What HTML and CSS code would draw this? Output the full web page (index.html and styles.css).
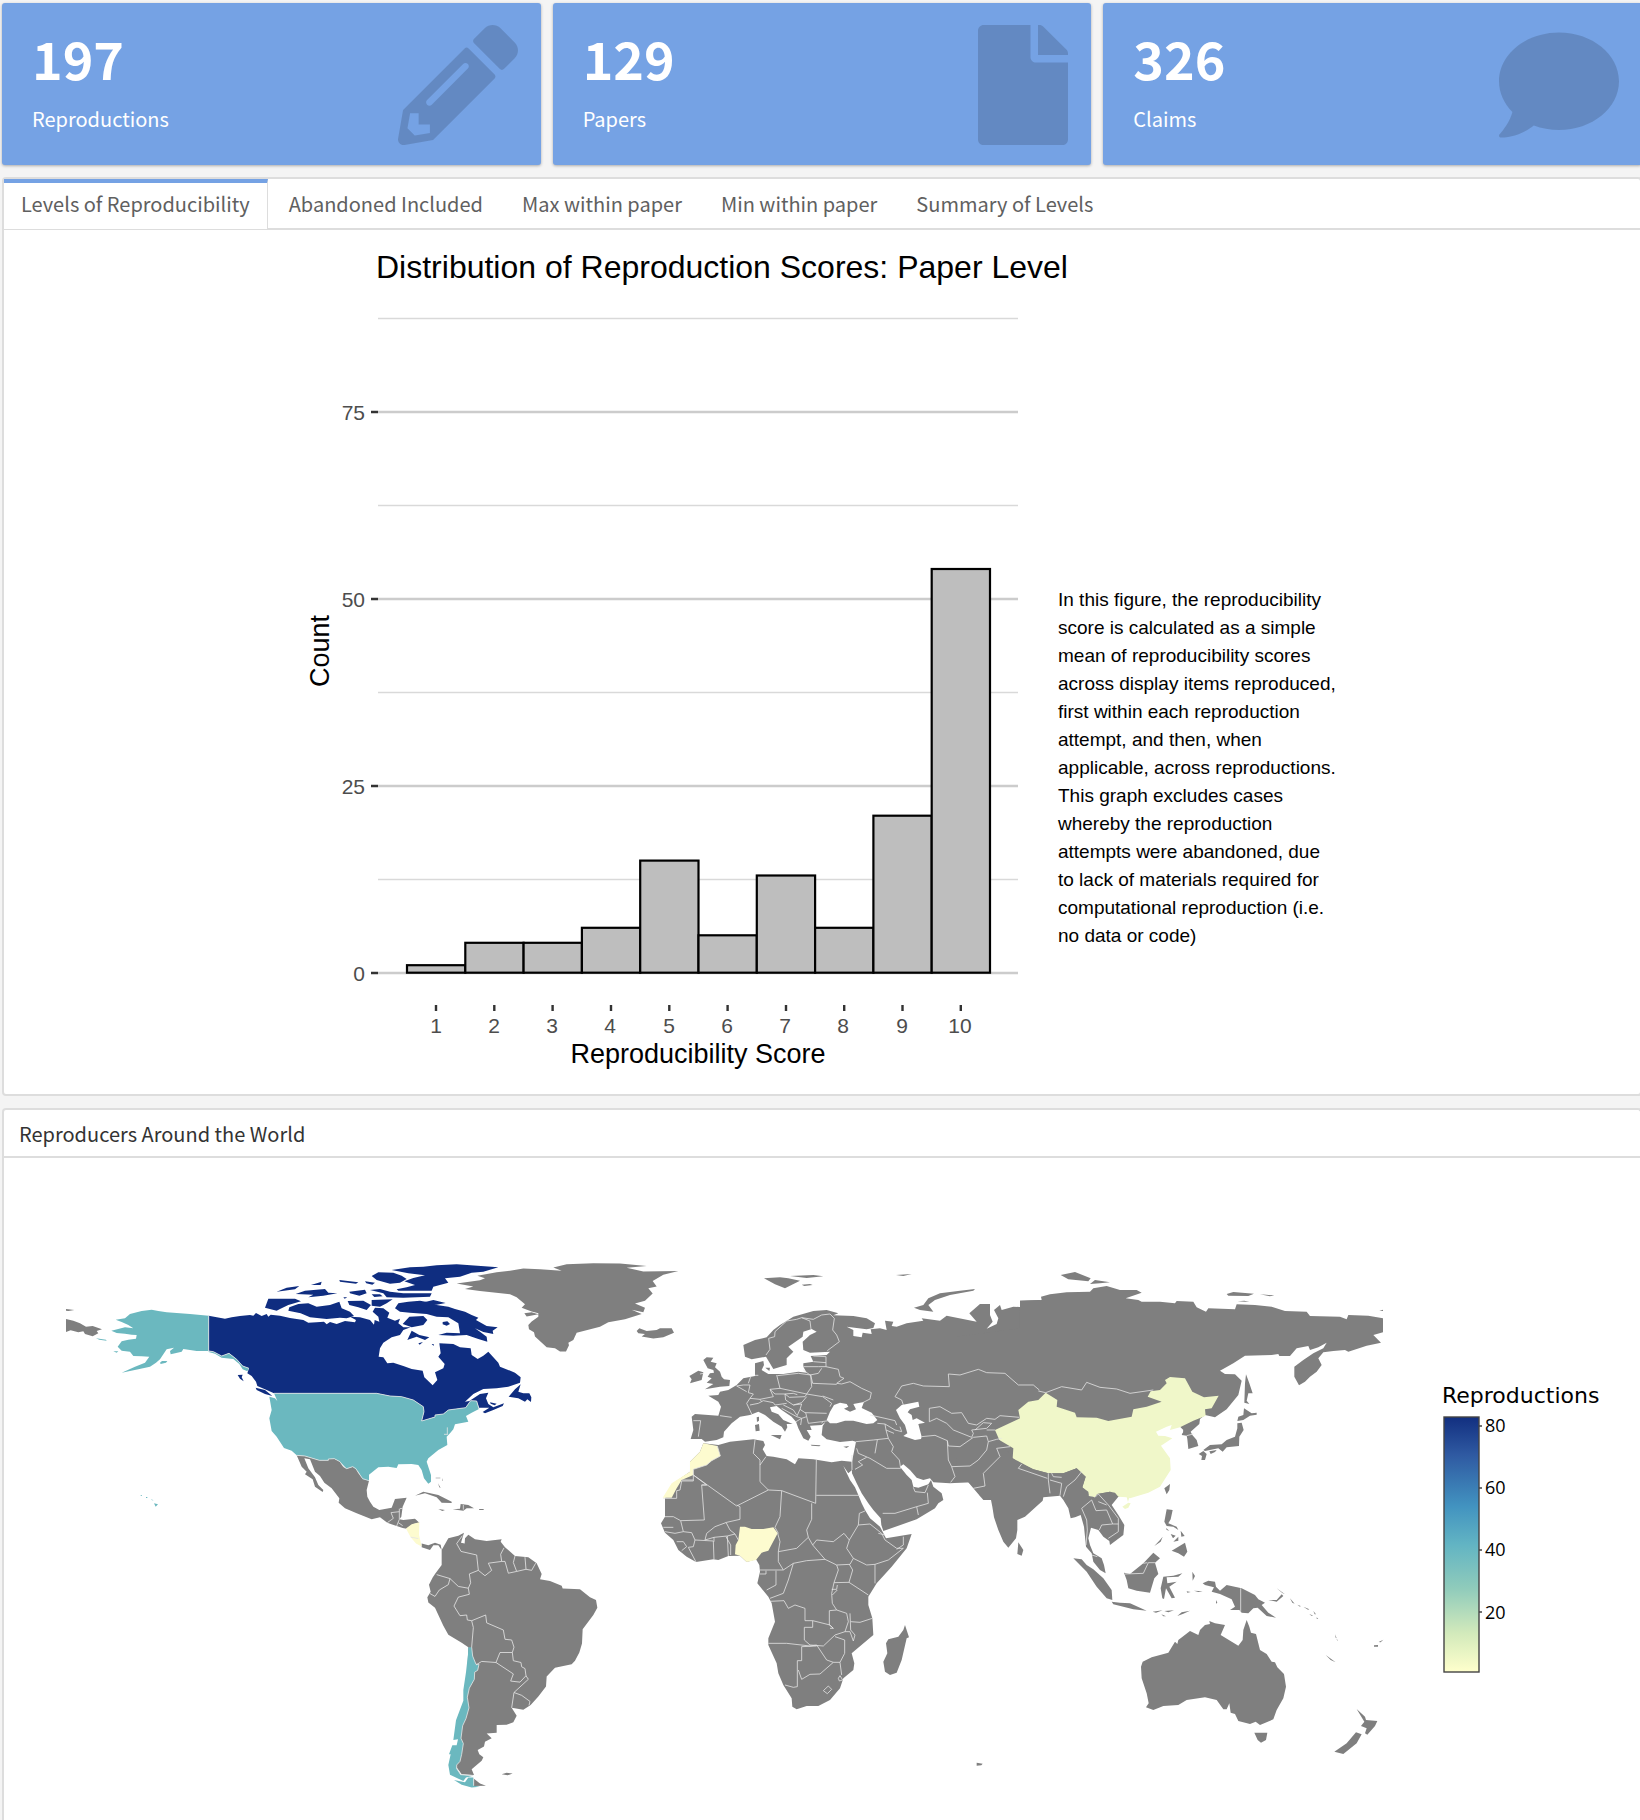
FILE: index.html
```html
<!DOCTYPE html>
<html lang="en">
<head>
<meta charset="utf-8">
<title>Reproductions dashboard</title>
<link rel="stylesheet" href="styles.css">
</head>
<body>
<main class="page">
  <section class="cards">
    <article class="card">
      <div><p class="value">197</p><p class="label">Reproductions</p></div>
      <svg class="icon" viewBox="0 0 512 512" aria-hidden="true"><path d="M497.9 142.1l-46.1 46.1c-4.7 4.7-12.3 4.7-17 0l-111-111c-4.7-4.7-4.7-12.3 0-17l46.1-46.1c18.7-18.7 49.1-18.7 67.9 0l60.1 60.1c18.8 18.7 18.8 49.1 0 67.9zM284.2 99.8L21.6 362.4.4 483.9c-2.9 16.4 11.4 30.6 27.8 27.8l121.5-21.3 262.6-262.6c4.7-4.7 4.7-12.3 0-17l-111-111c-4.8-4.7-12.4-4.7-17.1 0zM124.1 339.9c-5.5-5.5-5.5-14.3 0-19.8l154-154c5.5-5.5 14.3-5.5 19.8 0s5.5 14.3 0 19.8l-154 154c-5.5 5.5-14.3 5.5-19.8 0zM88 424h48v36.3l-64.5 11.3-31.1-31.1L51.7 376H88v48z"/></svg>
    </article>
    <article class="card">
      <div><p class="value">129</p><p class="label">Papers</p></div>
      <svg class="icon" viewBox="0 0 384 512" aria-hidden="true"><path d="M224 136V0H24C10.7 0 0 10.7 0 24v464c0 13.3 10.7 24 24 24h336c13.3 0 24-10.7 24-24V160H248c-13.2 0-24-10.8-24-24zm160-14.1v6.1H256V0h6.1c6.4 0 12.5 2.5 17 7l97.9 98c4.5 4.5 7 10.6 7 16.9z"/></svg>
    </article>
    <article class="card">
      <div><p class="value">326</p><p class="label">Claims</p></div>
      <svg class="icon" viewBox="0 0 512 512" aria-hidden="true"><path d="M256 32C114.6 32 0 125.1 0 240c0 49.6 21.4 95 57 130.7C44.5 421.1 2.7 466 2.2 466.5c-2.2 2.3-2.8 5.7-1.5 8.7S4.8 480 8 480c66.3 0 116-31.8 140.6-51.4 32.7 12.3 69 19.4 107.4 19.4 141.4 0 256-93.1 256-208S397.4 32 256 32z"/></svg>
    </article>
  </section>

  <section class="panel">
    <nav class="tabs" role="tablist">
      <button class="tab active" role="tab" aria-selected="true">Levels of Reproducibility</button>
      <button class="tab" role="tab">Abandoned Included</button>
      <button class="tab" role="tab">Max within paper</button>
      <button class="tab" role="tab">Min within paper</button>
      <button class="tab" role="tab">Summary of Levels</button>
    </nav>
    <figure class="figure">
      <svg class="chart" viewBox="302 230 740 864" role="img" aria-label="Distribution of reproduction scores">
        <text class="chart-title" x="376" y="278">Distribution of Reproduction Scores: Paper Level</text>
        <path class="minor" d="M378 318.5H1018M378 505.5H1018M378 692.5H1018M378 879.5H1018"/>
        <path class="major" d="M378 412H1018M378 599H1018M378 786H1018M378 973H1018"/>
        <g class="bars">
          <rect x="407" y="965.2" width="58.3" height="7.5"/>
          <rect x="465.3" y="942.8" width="58.3" height="29.9"/>
          <rect x="523.6" y="942.8" width="58.3" height="29.9"/>
          <rect x="581.9" y="927.8" width="58.3" height="44.9"/>
          <rect x="640.2" y="860.6" width="58.3" height="112.1"/>
          <rect x="698.5" y="935.3" width="58.3" height="37.4"/>
          <rect x="756.8" y="875.5" width="58.3" height="97.2"/>
          <rect x="815.1" y="927.8" width="58.3" height="44.9"/>
          <rect x="873.4" y="815.7" width="58.3" height="157"/>
          <rect x="931.7" y="569" width="58.3" height="403.7"/>
        </g>
        <path class="ticks" d="M371 412h7M371 599h7M371 786h7M371 973h7M436 1005v6M494.3 1005v6M552.6 1005v6M611 1005v6M669.3 1005v6M727.6 1005v6M786 1005v6M844.2 1005v6M902.5 1005v6M960.8 1005v6"/>
        <g class="tick-text" text-anchor="end">
          <text x="365" y="420">75</text><text x="365" y="607">50</text><text x="365" y="794">25</text><text x="365" y="981">0</text>
        </g>
        <g class="tick-text" text-anchor="middle">
          <text x="436" y="1033">1</text><text x="494" y="1033">2</text><text x="552" y="1033">3</text><text x="610" y="1033">4</text><text x="669" y="1033">5</text><text x="727" y="1033">6</text><text x="785" y="1033">7</text><text x="843" y="1033">8</text><text x="902" y="1033">9</text><text x="960" y="1033">10</text>
        </g>
        <text class="axis-title" text-anchor="middle" x="698" y="1063">Reproducibility Score</text>
        <text class="axis-title" text-anchor="middle" transform="translate(329 651) rotate(-90)">Count</text>
      </svg>
      <figcaption class="caption">In this figure, the reproducibility score is calculated as a simple mean of reproducibility scores across display items reproduced, first within each reproduction attempt, and then, when applicable, across reproductions. This graph excludes cases whereby the reproduction attempts were abandoned, due to lack of materials required for computational reproduction (i.e. no data or code)</figcaption>
    </figure>
  </section>

  <section class="panel last">
    <h2 class="panel-title">Reproducers Around the World</h2>
    <svg class="map" viewBox="0 0 1636 662" role="img" aria-label="World map of reproductions by country">
      <defs>
        <linearGradient id="scale" x1="0" y1="0" x2="0" y2="1">
          <stop offset="0" stop-color="#122f80"/><stop offset=".15" stop-color="#2f5aa2"/><stop offset=".35" stop-color="#4293c0"/><stop offset=".5" stop-color="#62b4c3"/><stop offset=".67" stop-color="#8fcbbb"/><stop offset=".85" stop-color="#d3eabb"/><stop offset="1" stop-color="#ffffcc"/>
        </linearGradient>
      </defs>

      <!-- North America -->
      <g transform="translate(46 82) scale(.33333)">
        <g class="land">
          <path d="M48 237L70 242 90 250 108 260 128 258 156 268 140 273 145 280 128 289 105 282 100 274 85 277 62 271 48 276ZM48 207L73 210 55 213 48 212Z"/>
          <path d="M740 646L765 648 808 661 835 661 835 657 853 656 870 665 880 680 890 686 908 680 918 686 925 698 938 716 957 722 950 750 952 770 960 785 970 800 988 810 1025 803 1035 777 1070 773 1058 800 1054 830 1048 838 1060 840 1095 836 1108 848 1090 852 1070 866 1058 864 1040 858 1022 852 1012 848 990 832 965 838 920 820 885 805 866 788 868 775 845 745 823 728 810 708 795 695 780 658 763 655 775 685 795 712 805 735 820 750 818 756 795 740 788 718 765 703 770 695 755 680Z"/>
          <path d="M1095 767L1120 755 1165 765 1205 785 1205 789 1175 788 1160 772 1125 760ZM1165 807l20 3-8 3ZM1208 808L1230 806 1232 792 1255 795 1272 805 1250 805 1240 812ZM1287 807h15l-2 3h-12ZM1164 730l8 14-4-2ZM1157 713h14v2h-14ZM1176 714l2 8h-2Z"/>
        </g>
        <g class="canada">
          <path d="M476 227L525 236 545 232 570 228 600 225 610 227 618 219 635 228 650 222 655 230 662 224 690 227 720 234 760 240 775 248 800 247 822 245 830 253 840 246 860 252 885 243 915 247 918 240 900 230 930 232 960 240 972 254 974 240 988 245 985 230 968 215 975 203 1000 205 1018 218 1012 233 1035 242 1050 236 1045 250 1060 262 1082 262 1060 270 1050 285 1025 292 1000 308 990 325 986 350 1000 352 1012 370 1030 368 1060 378 1085 387 1118 392 1123 412 1148 436 1162 420 1155 397 1180 385 1184 372 1165 350 1172 340 1168 310 1210 312 1230 322 1262 325 1265 345 1283 357 1300 347 1315 335 1345 368 1350 380 1395 398 1412 412 1410 428 1375 440 1340 445 1300 447 1270 462 1245 485 1258 483 1290 462 1315 458 1308 475 1315 492 1330 502 1362 490 1358 498 1330 510 1305 520 1298 516 1318 503 1287 503 1280 483 1262 482 1247 503 1195 510 1180 522 1155 525 1155 531 1115 543 1122 515 1120 500 1090 480 1055 470 1020 468 980 460 672 460 650 450 622 438 618 425 605 408 592 400 597 385 578 378 560 358 537 340 515 348 490 335 476 333Z"/>
          <path d="M1412 433L1395 448 1376 470 1405 475 1425 485 1432 478 1443 486 1444 472 1438 460 1420 460 1405 455ZM617 443L645 450 667 468 645 462 620 450ZM563 405L578 404 575 412 581 424 570 416ZM655 176L735 176 753 184 715 195 690 207 680 212 645 203ZM718 202L745 192 775 190 800 200 840 195 868 185 875 205 900 215 912 228 890 235 870 233 830 237 780 232 752 220 715 212ZM680 155L710 143 748 138 735 148ZM737 162L765 152 825 147 835 158 862 160 820 167 775 172 790 164ZM783 135L815 125 812 135ZM868 120L925 127 918 131 870 125ZM898 155L945 149 950 160 928 167 900 160ZM945 124l30 4-8 6-18-4ZM893 183L940 182 963 195 950 210 925 202 898 195ZM880 172h12l-8 4ZM965 180L1028 178 1010 190 990 200 965 197ZM960 150L990 147 1020 155 1060 160 1145 160 1140 170 1060 173 1010 172 1000 160ZM965 163h25l8 6-25 2ZM965 108L985 97 1030 98 1055 107 1070 117 1050 128 1020 131 980 120ZM1025 90L1080 82 1120 80 1160 76 1220 73 1345 82 1300 95 1265 98 1230 110 1185 115 1195 128 1150 140 1145 152 1045 152 1040 148 1070 142 1095 135 1063 124 1090 114 1125 106 1075 100Z"/>
          <path d="M1035 205L1045 190 1075 185 1110 182 1135 187 1160 195 1195 200 1215 207 1245 215 1265 225 1285 233 1278 240 1310 258 1343 262 1328 272 1330 282 1300 276 1275 265 1290 275 1310 290 1312 305 1285 297 1250 285 1210 287 1165 285 1190 278 1230 280 1225 250 1195 232 1160 230 1130 222 1080 218 1050 215ZM1078 230L1120 228 1132 240 1120 255 1085 262 1058 252ZM1085 272L1108 285 1138 292 1125 300 1100 290 1080 297 1072 300ZM1125 186L1150 180 1187 189 1160 194ZM1178 246l14-2 8 8-10 5-12-4ZM1145 312h6v6ZM1105 310l14-4-10 8ZM1320 487l20 4-6 5-12-5Z"/>
        </g>
        <g class="usa">
          <path d="M476 227L420 222 380 219 350 217 325 213 305 209 275 213 240 222 225 235 197 239 215 246 235 255 250 265 225 262 184 272 200 279 225 281 245 284 260 285 258 296 235 299 215 304 203 320 215 332 240 335 250 348 275 349 298 350 285 368 255 380 215 398 265 388 300 380 318 368 330 358 338 346 350 328 372 323 360 333 362 343 395 335 400 327 440 333 476 333 490 335 515 348 537 340 560 358 578 378 597 385 592 394 578 388 568 372 550 357 515 353 495 341 476 336Z"/>
          <path d="M672 460H980L1020 468 1055 470 1090 480 1120 500 1122 515 1115 543 1155 531 1155 525 1180 522 1195 510 1247 503 1262 482 1280 483 1287 507 1265 518 1248 528 1255 545 1215 553 1210 568 1200 580 1190 590 1192 615 1165 630 1135 655 1130 665 1143 705 1143 725 1135 731 1122 715 1115 690 1105 675 1085 672 1045 673 1040 684 1015 680 985 682 957 704 957 722 938 718 925 695 908 680 890 686 870 665 853 656 835 657 835 661 808 661 765 648 740 646 725 632 702 624 680 590 665 573 658 535 665 510 658 470 675 475 682 483Z"/>
          <path d="M330 368l6-5 16 0-4 5-16 4ZM190 334h15l-5 4ZM138 295l30 4 2 3-22-3ZM312 790l12 3-7 7ZM303 778l8 3-5 0ZM288 771h4v3h-4ZM272 766h4v2h-4Z"/>
        </g>
        <path class="line" d="M476 227V333L490 335 515 348 537 340 560 358 578 378 597 385M672 460H980L1020 468 1055 470 1090 480 1120 500 1122 515 1115 543 1155 531 1155 525 1180 522 1195 510 1247 503 1262 482 1280 483 1287 507M740 646L765 648 808 661 835 661 835 657 853 656 870 665 880 680 890 686 908 680 918 686 925 698 938 716 957 722"/>
        <path class="line" d="M1012 848L1030 835 1023 818 1048 815M1048 806V838L1040 858M1058 805L1050 806M1045 848L1058 857M1240 795v14M1192 562v20M1182 583h12"/>
      </g>

      <!-- Greenland and South America -->
      <g transform="translate(376 82) scale(.33333 .35714)">
        <g class="land">
          <path d="M230 122L300 113 315 107 292 100 350 90 390 86 430 80 480 82 545 86 520 77 560 68 640 65 720 66 800 73 740 78 790 88 895 87 850 97 818 115 830 130 805 135 818 150 795 170 765 178 795 190 790 202 755 195 785 207 735 222 685 230 660 243 590 260 580 280 565 288 567 295 558 312 540 312 525 303 500 300 465 270 462 258 447 250 445 238 455 228 475 215 475 205 455 200 425 190 435 180 410 160 390 152 300 143 255 137 280 130ZM433 205L455 202 475 208 440 214Z"/>
          <path d="M770 255L778 247 800 255 830 252 840 247 875 247 882 260 850 272 820 276 785 270 795 263 775 261Z"/>
          <path d="M125 850L145 855 165 848 182 853 185 868 175 855 160 855 150 868 125 860Z"/>
          <path d="M185 868L205 835 235 828 252 820 247 835 243 848 254 850 255 835 265 825 285 838 320 843 365 838 362 845 375 860 405 885 445 888 470 905 485 935 480 950 510 955 545 968 548 976 600 978 630 1000 648 1008 652 1030 640 1050 608 1090 606 1130 598 1155 585 1178 575 1188 525 1198 500 1222 498 1250 475 1278 452 1302 430 1315 395 1310 410 1332 400 1350 380 1357 350 1358 350 1380 320 1382 335 1395 315 1405 312 1418 293 1428 298 1440 310 1448 305 1458 290 1470 275 1482 282 1498 245 1496 225 1470 258 1300 265 1140 245 1128 205 1105 190 1080 165 1030 145 1015 142 1000 152 985 147 965 158 945 165 935 185 910Z"/>
          <path d="M281 1508L300 1522 318 1528 281 1529ZM365 1496l15-4 18 2-15 5Z"/>
        </g>
        <path class="usa" d="M265 1140L275 1140 278 1165 288 1188 297 1188 293 1205 284 1210 283 1230 268 1255 262 1280 267 1310 258 1340 248 1360 243 1395 250 1410 245 1440 240 1460 230 1470 230 1480 242 1497 280 1500 258 1505 250 1515 210 1497 205 1470 212 1440 207 1440 217 1415 230 1415 234 1398 220 1400 228 1345 250 1290 250 1260 258 1210 264 1160ZM222 1512L255 1518 265 1505 280 1505 281 1528 300 1531 275 1533 245 1525Z"/>
        <path class="pale" d="M78 808L95 796 118 790 117 825 125 858 108 850 92 832Z"/>
        <path class="line" d="M275 1140L278 1165 288 1188 297 1188 293 1205 284 1210 283 1230 268 1255 262 1280 267 1310 258 1340 248 1360 243 1395 250 1410 245 1440 240 1460 230 1470 230 1480 242 1497 280 1500M281 1508V1528"/>
        <path class="line" d="M247 828L230 850 243 872 290 882 295 925 268 935 272 960 265 975M295 925L315 940 335 925 325 905 365 900 362 880 372 862M365 900L375 900 385 933 410 928 400 903 405 885M410 928L438 922 435 888M438 922L455 925 467 905M170 937L210 948 235 970 265 975 268 992M210 948L205 965 178 980 165 998 150 990M268 992L235 1000 222 1025 240 1052 260 1050 262 1064 275 1066 280 1085 275 1140M275 1066L317 1050 320 1072 370 1092 375 1118 395 1120 402 1140 397 1155 360 1155 348 1183 305 1180 288 1190M348 1183L400 1215 392 1235 420 1238 438 1220 435 1200 425 1195 423 1183 400 1178 397 1155M438 1220L445 1230 402 1267 395 1310M402 1267L425 1275 450 1292 447 1303M92 832L115 836"/>
      </g>

      <!-- Europe -->
      <g transform="translate(636 92) scale(.33333)">
        <g class="land">
          <path d="M310 285L345 270 380 262 400 240 420 225 460 200 520 183 560 180 595 190 580 196 640 198 680 205 705 220 700 234 680 238 620 230 640 240 640 258 665 262 668 248 695 252 692 238 720 235 740 240 735 212 760 215 755 228 770 230 800 220 850 212 845 205 900 212 920 197 1010 215 988 190 1020 162 1050 162 1050 195 1058 215 1040 236 1070 222 1075 205 1062 180 1080 165 1085 180 1120 170 1150 172 1140 152 1200 150 1200 750 1030 750 1000 715 985 697 930 700 880 697 870 685 850 690 830 683 810 660 790 643 780 650 800 675 815 690 820 710 835 713 865 703 873 690 880 710 905 730 910 750 895 760 885 775 865 787 830 808 730 843 724 825 722 805 700 780 685 760 665 730 650 700 636 670 635 640 648 575 638 572 600 576 560 568 545 555 548 528 556 516 545 525 510 527 515 540 500 540 512 560 505 572 490 565 475 535 468 515 455 500 425 480 410 468 390 472 395 485 415 493 430 510 458 522 440 522 442 532 435 545 425 530 400 515 375 495 355 485 330 495 300 500 275 520 252 545 250 562 230 570 195 575 185 567 152 567 160 540 155 500 165 492 235 497 243 470 235 455 205 437 235 435 240 425 265 420 290 405 310 385 345 378 345 340 370 333 372 345 365 360 385 372 430 372 475 365 500 368 490 350 490 340 520 335 512 318 560 315 570 305 510 308 490 300 488 275 510 255 530 245 515 237 490 245 488 260 445 290 460 305 440 325 440 345 400 357 378 320 335 328 315 320Z"/>
          <path d="M190 330L200 322 220 323 212 335 230 340 225 352 240 365 245 380 252 388 270 390 268 408 240 410 195 418 220 402 200 398 215 385 203 380 210 370 222 368 220 360 203 355ZM148 378L175 362 190 367 185 390 150 400 155 388ZM345 525l12-3 2 20-12 2ZM350 502l7-2 0 12-6 4ZM392 555L425 555 420 568ZM512 584L542 586 538 589 515 587ZM610 590l18-2-8 6ZM376 353h14l-2 10ZM372 85L420 82 445 85 480 92 465 100 435 115 405 103ZM450 78L520 75 550 79 500 84ZM485 104l25-2 8 3-25 3ZM768 75L815 72 790 78ZM822 173L850 165 865 145 900 130 960 122 1005 117 1000 122 930 135 885 150 865 165 880 185 840 180Z"/>
        </g>
        <path class="sea" d="M560 510L570 485 582 465 600 458 620 462 625 470 612 476 630 485 648 478 640 462 672 456 665 474 695 488 712 510 700 520 680 522 640 512 615 512 590 520 570 520ZM768 480L785 465 835 455 838 470 810 478 803 487 815 495 818 510 830 505 855 518 835 522 845 560 843 567 825 570 790 558 802 550 795 525 780 505Z"/>
      </g>

      <!-- Africa and Arabia -->
      <g transform="translate(636 272) scale(.33333)">
        <g class="land">
          <path d="M190 40L235 45 270 35 340 28 370 33 375 45 368 58 380 78 400 80 440 88 465 103 475 85 520 88 575 97 605 92 635 95 636 120 625 130 610 108 630 150 645 172 655 195 665 220 675 240 690 265 720 290 738 325 815 312 800 355 755 410 710 460 685 500 685 525 697 565 700 615 635 670 643 700 640 720 610 745 600 775 570 810 535 828 500 828 470 838 457 830 455 805 430 765 415 730 410 700 385 645 385 625 405 575 395 520 385 500 352 460 360 425 358 405 348 388 320 396 300 377 265 378 235 390 220 388 168 396 140 380 115 360 100 330 75 308 63 280 75 260 75 205 100 160 150 125 150 95 180 65Z"/>
          <path d="M795 585L807 622 800 625 785 690 770 728 750 735 735 725 730 695 742 670 738 640 745 628 775 620 790 600Z"/>
        </g>
        <path class="pale" d="M190 40L232 48 241 78 215 92 200 105 160 118 160 135 125 150 110 175 95 203 68 203 95 160 150 125 150 95 180 65ZM300 290L315 290 335 297 370 297 400 292 413 310 385 362 365 368 348 390 320 396 300 377 285 373 287 345 295 330Z"/>
        <path class="line" d="M232 48L241 78 215 92 200 105 160 118V153H125L120 180 110 182V205H70M125 150H160M160 135L290 228 385 180 360 155 360 90 340 70 345 30M360 105L378 80M160 135L200 165 185 165 193 270 122 272 100 260 75 260M185 165H200M290 225L300 230V268L260 277 225 290 200 310 195 330M385 180L425 182 527 220 529 90M425 182L420 260 405 292M515 220V268L500 300 505 322M529 196H660M122 272L130 305 105 310 75 305M70 292H100M130 305L155 308 165 330 160 350 145 352 168 396M165 330L220 333 222 388M110 335L130 335 140 350 125 362M195 330L222 322 262 318 265 378M222 322V335M262 318L285 312 295 330M258 277L270 300 285 312M258 320L272 345V375M413 310L420 335 415 365 470 355 505 322 518 345 555 388 500 392 460 400 430 420 415 395 415 365M415 310L405 292M518 345L530 330 580 335 612 310 628 330 620 355 640 385 630 403 590 405 555 388M628 330L655 285 690 282 725 310 735 330 770 355 790 355 745 390 705 403 680 405 640 385M655 285L658 250 675 243M790 320L790 345 770 358M715 310L735 315M705 403L705 460M590 405L595 420 582 458 627 457 685 495M627 457L638 420 628 403M582 458L575 490 577 520 590 540 568 542V585L580 595M575 478L590 478 592 465M577 495L592 480M590 540L620 550 625 575 615 605 585 615 550 648 510 645 493 630V592H518V572H495V535L465 525 445 535 432 512 390 514M518 572L570 585 580 595 570 595M360 420L430 420M360 432H378V422M408 422V465L380 480M460 400L445 450 430 490 390 505M632 575L660 577 697 565M630 550L632 600 645 615 640 633 630 605 615 605M385 640L440 640 510 648 530 645 560 690 580 697 600 697 605 735M485 650V692H472V770L460 772 435 765M485 650L530 648M475 720L485 748 510 733 540 732 580 697M585 620L614 630V670L600 697M595 745L600 737 608 750 598 753ZM550 782L565 768 575 778 562 791ZM728 250L765 250 830 230 865 220 862 188M830 230L835 255"/>
      </g>

      <!-- North and East Asia -->
      <g transform="translate(956 92) scale(.33333)">
        <g class="land">
          <path d="M180 152L245 150 243 140 270 133 320 127 390 125 400 115 440 108 480 120 530 120 545 128 497 145 535 150 545 155 600 155 645 160 650 153 700 155 710 172 738 185 745 175 825 178 830 163 885 165 935 170 975 183 1040 185 1050 198 1140 200 1160 208 1165 195 1225 197 1269 205 1269 247 1240 255 1263 278 1220 287 1165 305 1155 300 1120 303 1090 307 1075 325 1085 345 1070 365 1050 380 1035 395 1017 406 1003 380 1003 350 1030 330 1060 310 1090 295 1100 278 1075 292 1050 300 1045 288 1010 295 990 318 958 318 955 312 935 315 855 317 820 340 780 362 795 372 825 373 845 392 835 435 800 478 765 502 735 495 720 507 718 522 692 545 697 555 710 570 715 588 685 597 682 567 680 557 665 555 670 540 660 530 600 515 560 560 560 700 475 740 400 740-10 640-10 260 180 235Z"/>
          <path d="M858 373L868 400 878 430 865 430 860 452 868 462 853 458 855 400ZM852 475L875 490 890 488 890 494 870 497 850 510 832 513 835 500 850 495ZM845 518L851 540 838 560 837 588 800 592 788 605 775 595 735 603 730 600 750 585 785 583 800 570 825 560 832 535 832 520ZM716 612L730 603 740 612 735 630 724 630 726 618ZM748 604L770 600 765 606 752 612ZM613 715L630 702 628 720 620 733ZM302 75L345 66 392 85 385 94 325 88ZM390 102L405 90 450 97 420 100ZM800 132L820 126 882 131 865 138 805 137ZM900 133L943 136 930 139ZM833 154l20-2 15 4ZM1258 183l11-4v4Z"/>
        </g>
        <path class="sea" d="M660 532L630 540 635 525 620 530 586 545 595 557 615 558 637 565 660 560 670 545Z"/>
        <path class="china" d="M257 428L292 450 290 470 345 488 350 502 410 503 445 513 515 500 520 478 560 470 605 455 563 440 572 424 600 420 620 400 615 390 630 381 675 385 697 425 732 442 776 437 755 475 735 478 737 497 700 512 660 532 630 540 635 525 620 530 588 545 595 557 615 558 637 565 603 587 630 625 632 660 600 710 565 728 510 745 500 742 475 740 450 725 412 732 405 742 387 738 385 725 367 712 377 680 350 655 310 670 265 670 220 658 185 642 158 625 160 595 118 570 105 540 180 505 175 480 205 455 235 450ZM487 770L505 758 512 760 505 773 495 777ZM500 742l8 0-4 14Z"/>
        <path class="line" d="M235 423L257 428 305 410 365 420 380 397 420 412 470 417 510 430 580 420M680 557L700 552M185 642L175 655 262 685V670M262 685L305 692M275 670L280 680 305 682M265 688L270 730"/>
      </g>

      <!-- South Asia and Oceania -->
      <g transform="translate(956 272) scale(.33333)">
        <g class="land">
          <path d="M-10 157L25 157 45 175 60 197 75 208 92 205 97 230 102 262 115 300 130 335 145 353 168 325 172 300 172 270 195 260 248 212 250 202 300 197 310 210 325 235 332 265 345 262 362 255 372 290 378 350 395 370 400 395 420 420 437 430 432 405 425 385 400 370 390 345 385 325 393 293 415 300 430 320 448 333 450 345 490 315 493 285 475 255 455 225 475 200 465 188 450 185 412 192 405 202 387 198 367 172 377 140 350 115 310 130 265 130 220 118 158 85 118 30 0 20-10 20Z"/>
          <path d="M175 337L190 360 185 377 172 372ZM340 385L365 388 380 405 400 418 430 445 455 480 457 510 440 505 410 470 380 425ZM455 515L480 518 510 520 560 542 520 538 460 523ZM492 428L510 432 550 400 580 368 600 385 585 398 595 432 583 445 570 488 530 482 505 475 500 450ZM610 440L640 437 667 430 655 440 620 442 622 460 650 455 628 470 645 503 635 505 618 475 612 507 607 505 602 475ZM620 238L638 240 632 268 625 280 650 290 655 300 640 290 620 288 613 275ZM635 362L655 350 675 338 682 365 672 380 655 370ZM632 312l15 5-8 8ZM662 302l12 16-10 2ZM640 335l15-15v12ZM583 348L600 330 608 320 602 335ZM618 294l10 8-8-2ZM578 545l30-4-20 7ZM613 543L642 541 625 547ZM604 553l14 6-8 0ZM652 558L665 547 690 542 670 551ZM680 484l12 2-10 2ZM702 482L728 484 715 486ZM697 425L705 438 698 452ZM768 510l4 8-4 3Z"/>
          <path d="M728 460L745 452 765 455 768 470 780 482 800 465 845 475 885 495 895 508 915 518 905 525 925 548 948 563 920 558 893 533 880 535 865 550 845 548 838 540 810 540 825 530 815 508 780 492 755 485 762 472 735 465ZM925 510L950 510 965 493 970 498 950 515ZM950 475l25 18-8-4ZM990 505l14 16-7-3ZM1012 524l10 4-2 2ZM1030 530l18 8-4 1ZM1048 552l12 5-6 0ZM1060 543l8 10-4 0ZM1070 562l5 5-5-1ZM1125 613l5 12-3-2ZM1130 626l4 6-3-1ZM1097 675L1127 697 1112 690ZM1242 646l12-1v5h-12ZM1256 636L1270 629 1262 637ZM50 998l18 3-4 5-14 1Z"/>
          <path d="M860 570L868 590 873 608 888 612 900 660 920 672 935 695 945 697 952 712 972 732 978 770 970 805 950 840 940 868 900 885 887 875 870 882 835 873 825 852 812 848 808 820 800 838 790 838 770 810 735 802 680 810 655 825 610 828 580 840 558 832 566 820 560 790 545 745 543 710 548 695 575 682 625 668 645 635 652 642 655 630 690 603 715 615 720 600 735 585 750 582 748 573 765 580 795 585 782 615 835 647 848 630 850 600ZM883 908L922 908 918 930 903 938 893 930ZM1190 837L1215 860 1218 870 1252 873 1245 888 1222 914 1215 910 1220 895 1203 888 1213 875ZM1188 907L1205 913 1190 940 1150 972 1123 965 1160 940Z"/>
        </g>
        <path class="line" d="M842 475V545M495 432L550 430 565 398 585 398M550 400L562 398M300 197L305 160 270 150M265 150L270 190M265 130V150M275 130L280 140 305 142M185 102L175 115 262 145M310 200L320 170 345 150 365 125M395 210L365 235 380 270 382 300 378 345M395 210L408 242 440 240 458 282 475 282M405 202L415 192 445 225 475 265V305L445 325M458 282L425 285 418 300M415 215L440 225M395 375L412 380"/>
      </g>

      <!-- Borders of Europe, the Middle East and Central Asia -->
      <g transform="translate(636 92) scale(.33333)">
        <path class="line" d="M378 315L390 298 386 265 404 260 405 245 440 213 470 208 485 203 510 213 513 237M485 203L520 208 545 195 570 192 583 205 578 240 590 255 598 275 562 302M520 318L558 320 558 350 595 358 600 380 612 385 590 400 605 402 630 395 665 415 694 428 690 447 668 458M520 335L558 338M490 350L535 350 558 350M490 360L510 375 535 370 545 355M412 377L475 370 512 375 518 400 590 403M512 375L515 410 500 432 420 415 410 375M500 432L548 440 575 460 570 470M500 432L495 440 448 442 435 432 460 430 472 434M420 415L390 418 405 432 435 432 437 450 460 465 485 458 500 440M390 418L400 440 360 448 330 445 340 432 325 428 330 405 310 405M310 405L290 408 320 425M325 400L332 380M345 376L355 376M330 445L320 460 335 492M330 465L355 460 370 452 400 458 405 465 440 460M360 448L365 455M240 497L275 502M160 512L182 512 175 560M430 465L460 480 470 495M425 475L470 500M460 465L485 462 480 478 495 488 560 490M480 478L470 500 485 505 500 500 497 488M500 500L505 520 545 515 565 512M468 515L485 505 482 525M545 520L548 515M548 438L580 450M180 372L190 370M690 495L735 505 765 512 770 525M712 520L735 522 738 540 745 565 700 570 648 575M735 522L765 540 785 545 780 530M738 540L762 550M790 465L785 450 765 440 785 408 820 400 850 408 928 410 925 372 960 375 1015 358 1040 368 1095 370 1135 405 1180 405 1198 420M868 515V475L900 470 935 490 965 488 985 520 1010 525 1040 505 1065 508 1080 497 1138 502M868 515L890 505 920 520 940 540 995 562 1000 550 995 540 1040 535 1055 520 1030 518 1005 540M1040 540L1065 540M845 560L885 556 922 572 925 588 960 590 1000 562 1040 558 1045 575 1070 568 1085 565M922 572L925 630 935 650 945 680 932 697M935 650L990 648 1015 630 1040 600 1045 575M1110 590L1070 595 1080 620 1030 670 1035 708 1000 715M745 565L760 590 755 605 778 630 782 655 740 655 690 625 655 610 650 595M705 610L712 570M680 622L655 635 668 645 645 658M636 615L636 660M820 712L825 725 855 728 865 705"/>
      </g>

      <!-- Color scale -->
      <g class="legend">
        <text class="legend-title" x="1438" y="245">Reproductions</text>
        <rect x="1440" y="259" width="35" height="255" fill="url(#scale)" stroke="#444" stroke-width="1.4"/>
        <path d="M1475 268h3M1475 330h3M1475 392h3M1475 454h3" stroke="#444" stroke-width="1.4"/>
        <text x="1481" y="274">80</text><text x="1481" y="336">60</text><text x="1481" y="398">40</text><text x="1481" y="461">20</text>
      </g>
    </svg>
  </section>
</main>
</body>
</html>
```
FILE: styles.css
```css
* { box-sizing: border-box; }
html { overflow-x: hidden; background: #f4f4f4; }
body {
  margin: 0;
  color: #333;
  font-family: "Noto Sans CJK SC", "Open Sans", sans-serif;
  font-size: 20px;
  overflow-x: hidden;
}
p, h2, figure { margin: 0; }

.page {
  display: flex;
  flex-direction: column;
  gap: 12px;
  min-height: 100vh;
  margin-right: -2px;
  padding: 3px 0 0 2px;
}

.cards { display: grid; grid-template-columns: repeat(3, 1fr); gap: 12px; }
.card {
  display: flex;
  justify-content: space-between;
  align-items: flex-start;
  height: 162px;
  padding: 22px 23px 0 30px;
  border-radius: 3px;
  background: #75a2e4;
  color: #fff;
  box-shadow: 0 1px 3px rgba(0, 0, 0, .3);
}
.value { margin-top: 3px; font-size: 52px; font-weight: 700; line-height: 60px; }
.label { margin-top: 17px; line-height: 28px; }
.icon { height: 120px; fill: rgba(0, 0, 0, .15); }

.panel { border: 2px solid #ddd; border-radius: 4px; background: #fff; }
.last { flex: 1; border-bottom: 0; border-radius: 4px 4px 0 0; }

.tabs { display: flex; gap: 4px; height: 51px; border-bottom: 2px solid #ddd; }
.tab {
  height: 50px;
  padding: 0 17px 4px;
  border: 0 solid transparent;
  border-width: 4px 1px 0 0;
  background: none;
  color: #606060;
  font: inherit;
  line-height: 42px;
  white-space: nowrap;
}
.active { border-top-color: #75a2e4; border-right-color: #ddd; background: #fff; }

.figure { display: flex; justify-content: center; gap: 16px; }
.chart { width: 740px; flex: none; overflow: visible; font-family: "Liberation Sans", Arial, sans-serif; }
.chart-title { font-size: 32px; }
.axis-title { font-size: 27px; }
.tick-text { font-size: 21px; fill: #4d4d4d; }
.minor { stroke: #d9d9d9; stroke-width: 1.6; }
.major { stroke: #ccc; stroke-width: 2.6; }
.ticks { stroke: #333; stroke-width: 2.4; }
.bars { fill: #bebebe; stroke: #000; stroke-width: 2.2; }
.caption {
  width: 284px;
  padding: 356px 4px 0 0;
  color: #000;
  font-family: "Liberation Sans", Arial, sans-serif;
  font-size: 19px;
  line-height: 28px;
}

.panel-title {
  padding: 2px 15px 0;
  border-bottom: 2px solid #ddd;
  font-size: 20px;
  font-weight: 400;
  line-height: 44px;
}
.map { display: block; width: 100%; }
.land { fill: #7f7f7f; }
.canada { fill: #0f2d80; }
.usa { fill: #6bb8bf; }
.china { fill: #f0f7c9; }
.pale { fill: #fdfbcf; }
.sea { fill: #fff; }
.line { fill: none; stroke: #e4e4e4; stroke-width: 2.4; stroke-linejoin: round; }
.legend { font-family: "Open Sans", sans-serif; font-size: 18px; }
.legend-title { font-family: "DejaVu Sans", Verdana, sans-serif; font-size: 22px; }
```
